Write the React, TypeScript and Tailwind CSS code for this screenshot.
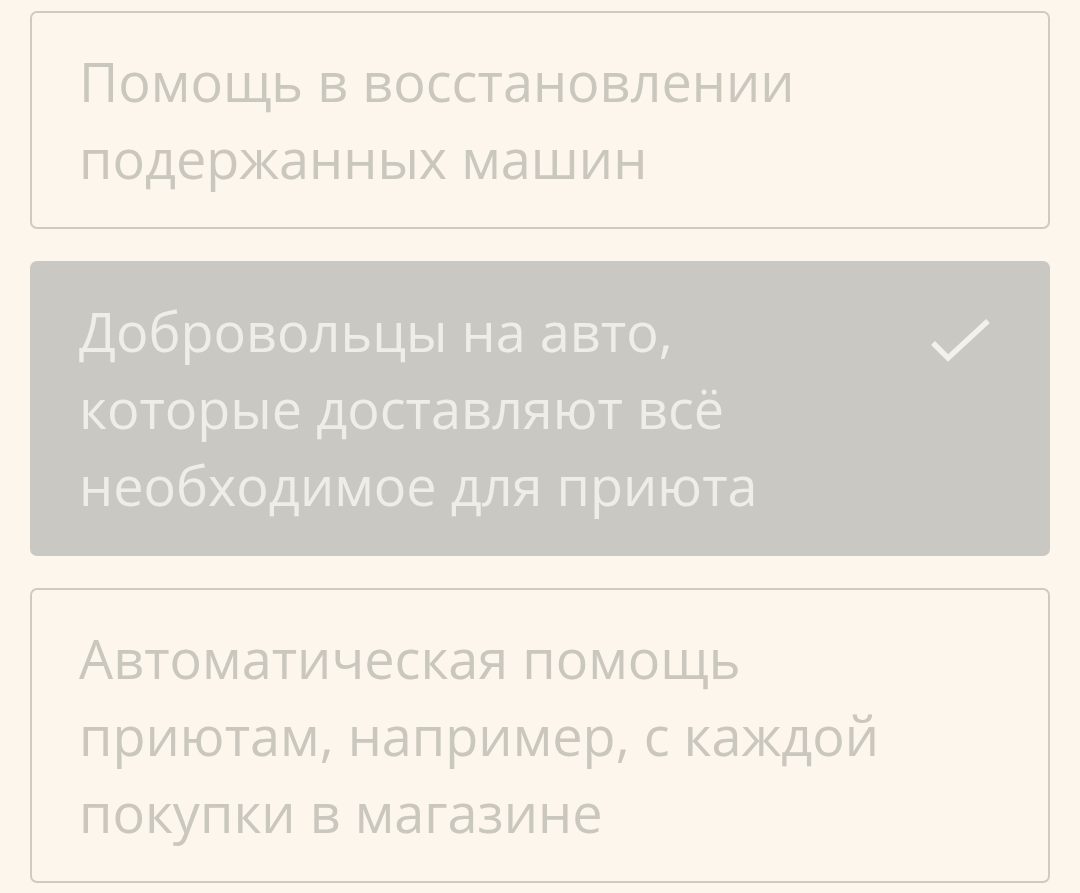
import { Fragment } from "react";

const options = [
  { lines: ["Помощь в восстановлении", "подержанных машин"], selected: false },
  {
    lines: ["Добровольцы на авто,", "которые доставляют всё", "необходимое для приюта"],
    selected: true,
  },
  {
    lines: ["Автоматическая помощь", "приютам, например, с каждой", "покупки в магазине"],
    selected: false,
  },
];

export default function App() {
  return (
    <div
      className="min-h-[893px] w-[1080px] bg-[#fcf6ec] px-[30px] pt-[11px] flex flex-col gap-[32px]"
      style={{ fontFamily: '"Open Sans", "Noto Sans", sans-serif' }}
    >
      {options.map((opt, i) => (
        <div
          key={i}
          className={
            opt.selected
              ? "flex items-start justify-between rounded-[7px] border-2 border-[#c9c8c2] bg-[#c9c8c2] pl-[47px] pr-[56px] py-[30px]"
              : "flex items-start justify-between rounded-[7px] border-2 border-[#cfcbc3] pl-[47px] pr-[56px] py-[30px]"
          }
        >
          <p
            className={
              opt.selected
                ? "text-[54px] leading-[77px] text-[#efede7] whitespace-nowrap"
                : "text-[54px] leading-[77px] text-[#cac7bf] whitespace-nowrap"
            }
          >
            {opt.lines.map((l, j) => (
              <Fragment key={j}>
                {l}
                {j < opt.lines.length - 1 && <br />}
              </Fragment>
            ))}
          </p>
          {opt.selected && (
            <svg width="62" height="48" viewBox="0 0 62 48" className="mt-[24px]">
              <path
                d="M3 26 L18 41 L58 4"
                fill="none"
                stroke="#f3f1eb"
                strokeWidth="5.5"
              />
            </svg>
          )}
        </div>
      ))}
    </div>
  );
}
